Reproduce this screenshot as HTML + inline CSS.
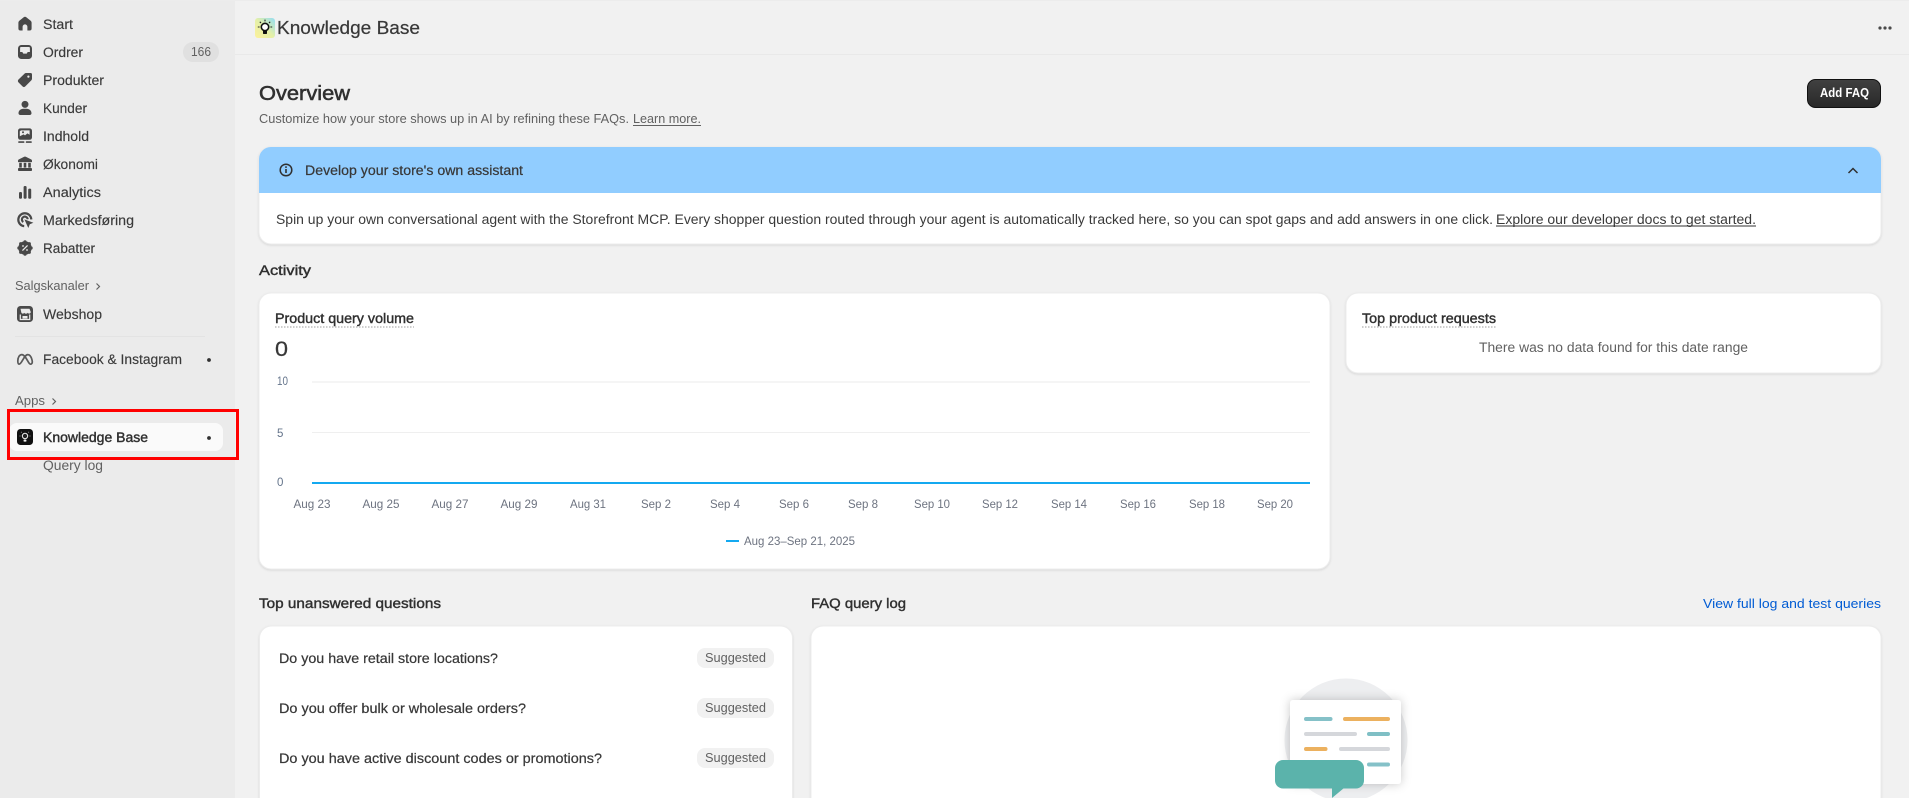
<!DOCTYPE html>
<html lang="en">
<head>
<meta charset="utf-8">
<title>Knowledge Base</title>
<style>
html,body{margin:0;padding:0;width:1909px;height:798px;overflow:hidden;background:#f1f1f1}
svg{display:block}
text{font-family:"Liberation Sans",Arial,sans-serif;font-size:13px;fill:#303030}
.nav{font-size:13.5px;fill:#3a3a3a;stroke:#3a3a3a;stroke-width:.14}
.g{fill:#616161}
.m{fill:#383838;stroke:#383838;stroke-width:.22}
.b{fill:#303030;stroke:#303030;stroke-width:.4}
.h{fill:#303030;stroke:#303030;stroke-width:.55}
.ax{font-size:11.5px;fill:#6d7380;text-anchor:middle}
.ay{font-size:11.5px;fill:#64748b}
.card{fill:#fff;stroke:#ececec;stroke-width:1;filter:drop-shadow(0 1px 1px rgba(0,0,0,.1))}
.ic{fill:#484848}
</style>
</head>
<body>
<svg xmlns="http://www.w3.org/2000/svg" width="1909" height="798" viewBox="0 0 1909 798">
<defs>
<linearGradient id="hg" x1="0" y1="1" x2="1" y2="0"><stop offset="0" stop-color="#fdf19a"/><stop offset=".5" stop-color="#e4f0a8"/><stop offset="1" stop-color="#92dcf2"/></linearGradient>
<linearGradient id="btn" x1="0" y1="0" x2="0" y2="1"><stop offset="0" stop-color="#414141"/><stop offset="1" stop-color="#282828"/></linearGradient>
<filter id="ds" x="-20%" y="-20%" width="140%" height="140%"><feDropShadow dx="0" dy="0" stdDeviation="5" flood-color="#000" flood-opacity=".22"/></filter>
</defs>

<!-- backgrounds -->
<rect width="1909" height="798" fill="#f1f1f1"/>
<rect width="235" height="798" fill="#ebebeb"/>
<rect x="235" y="54" width="1674" height="1" fill="#e9e9e9"/>
<rect width="1909" height="1" fill="#ececec"/>

<!-- sidebar icons -->
<g class="ic">
<g transform="translate(15,14)"><path d="M8.7 3.3a2.1 2.1 0 0 1 2.6 0l4.2 3.3c.7.5 1.1 1.3 1.1 2.2v5.7a2 2 0 0 1-2 2h-2.2v-3.7a2.4 2.4 0 0 0-4.8 0V16.5H5.4a2 2 0 0 1-2-2V8.8c0-.9.4-1.7 1.1-2.2z"/></g>
<g transform="translate(15,42)"><rect x="3" y="3" width="14" height="14" rx="3.4"/><path fill="#ebebeb" d="M6 5h8c.5 0 .9.4.9.9V10h-2.2l-1 1.6H8.3l-1-1.6H5.1V5.9c0-.5.4-.9.9-.9z"/></g>
<g transform="translate(15,70)"><path d="M11.2 3h4.3A1.5 1.5 0 0 1 17 4.5v4.3a2 2 0 0 1-.6 1.4l-6.1 6.2a2 2 0 0 1-2.8 0l-4-4a2 2 0 0 1 0-2.9l6.2-6A2 2 0 0 1 11.2 3z"/><circle cx="13.4" cy="6.6" r="1.1" fill="#ebebeb"/></g>
<g transform="translate(15,98)"><circle cx="10" cy="6.4" r="3.5"/><path d="M3.5 15.2c0-2.6 2.2-4.4 4.9-4.4h3.2c2.7 0 4.9 1.8 4.9 4.4 0 1-.8 1.8-1.8 1.8H5.3c-1 0-1.8-.8-1.8-1.8z"/></g>
<g transform="translate(15,126)"><rect x="3" y="2.4" width="14" height="11.4" rx="2.4"/><path fill="#ebebeb" d="M6 4.4h8.6v4.4l-2.2-1.4-2.4 2-1.4-1-3.8 1.8V5.2z"/><circle cx="8" cy="6.3" r="1" fill="#484848"/><rect x="3.2" y="15.3" width="6.2" height="1.6" rx=".7"/><rect x="10.8" y="15.3" width="6" height="1.6" rx=".7"/></g>
<g transform="translate(15,154)"><path d="M9.2 2.8c.5-.2 1.1-.2 1.6 0l5.3 2.6c.6.3.9.8.9 1.4v1.3H3V6.8c0-.6.3-1.1.9-1.4z"/><rect x="4.2" y="8.8" width="2.6" height="4.8"/><rect x="8.7" y="8.8" width="2.6" height="4.8"/><rect x="13.2" y="8.8" width="2.6" height="4.8"/><rect x="3" y="14" width="14" height="3" rx=".9"/></g>
<g transform="translate(15,182)"><rect x="4" y="10" width="3" height="6.8" rx="1.2"/><rect x="8.6" y="4" width="3" height="12.8" rx="1.2"/><rect x="13.2" y="6.6" width="3" height="10.2" rx="1.2"/></g>
<g transform="translate(15,210)"><path fill="none" stroke="#484848" stroke-width="2.2" d="M9.2 16.2a6.5 6.5 0 1 1 7.1-6.8"/><path fill="none" stroke="#484848" stroke-width="2.1" d="M8.3 12a2.9 2.9 0 1 1 4.4-2.8"/><path d="M9.4 9.4l9 3.3-3.6 1.5-1.5 3.8z"/></g>
<g transform="translate(15,238)"><circle cx="10" cy="10" r="6.7"/><circle cx="10" cy="3.9" r="1.6"/><circle cx="10" cy="16.1" r="1.6"/><circle cx="3.9" cy="10" r="1.6"/><circle cx="16.1" cy="10" r="1.6"/><circle cx="5.7" cy="5.7" r="1.6"/><circle cx="14.3" cy="5.7" r="1.6"/><circle cx="5.7" cy="14.3" r="1.6"/><circle cx="14.3" cy="14.3" r="1.6"/><path stroke="#ebebeb" stroke-width="1.3" stroke-linecap="round" d="M7.8 12.2l4.4-4.4"/><circle cx="8" cy="8" r=".9" fill="#ebebeb"/><circle cx="12" cy="12" r=".9" fill="#ebebeb"/></g>
</g>

<!-- sidebar labels -->
<text class="nav" x="43" y="29" textLength="30" lengthAdjust="spacingAndGlyphs">Start</text>
<text class="nav" x="43" y="57" textLength="40" lengthAdjust="spacingAndGlyphs">Ordrer</text>
<rect x="183" y="42" width="36" height="20" rx="10" fill="#e0e0e0"/>
<text x="191" y="56" style="font-size:12.5px;fill:#616161" textLength="20" lengthAdjust="spacingAndGlyphs">166</text>
<text class="nav" x="43" y="85" textLength="61" lengthAdjust="spacingAndGlyphs">Produkter</text>
<text class="nav" x="43" y="113" textLength="44" lengthAdjust="spacingAndGlyphs">Kunder</text>
<text class="nav" x="43" y="141" textLength="46" lengthAdjust="spacingAndGlyphs">Indhold</text>
<text class="nav" x="43" y="169" textLength="55" lengthAdjust="spacingAndGlyphs">Økonomi</text>
<text class="nav" x="43" y="197" textLength="58" lengthAdjust="spacingAndGlyphs">Analytics</text>
<text class="nav" x="43" y="225" textLength="91" lengthAdjust="spacingAndGlyphs">Markedsføring</text>
<text class="nav" x="43" y="253" textLength="52" lengthAdjust="spacingAndGlyphs">Rabatter</text>

<text x="15" y="290" style="font-size:12.5px;fill:#616161" textLength="74" lengthAdjust="spacingAndGlyphs">Salgskanaler</text>
<path d="M96.5 283.5l3 3-3 3" fill="none" stroke="#616161" stroke-width="1.2"/>

<rect x="17" y="306" width="16" height="16" rx="3.5" fill="#4a4a4a"/>
<path d="M20.5 308.8h9l1.3 3.2c0 1-.8 1.6-1.5 1.6-.7 0-1.2-.4-1.5-.9-.3.5-.9.9-1.5.9h-.6c-.6 0-1.2-.4-1.5-.9-.3.5-.8.9-1.5.9-.7 0-1.5-.6-1.5-1.6z" fill="#ebebeb"/>
<path d="M20.3 314.5v5h9.4v-5" fill="none" stroke="#ebebeb" stroke-width="1.2"/>
<rect x="22.5" y="316" width="5" height="2.6" fill="#ebebeb"/>
<text class="nav" x="43" y="319" textLength="59" lengthAdjust="spacingAndGlyphs">Webshop</text>

<rect x="15" y="336" width="190" height="1" fill="#e3e3e3"/>

<path d="M17.8 361c0-3.6 1.7-6.4 4-6.4 2.4 0 4.4 3.6 6.2 6.8 1 1.8 2 3.1 3.1 2.7 1.2-.5 1.4-2.5.8-4.6-.7-2.6-2.2-4.9-4.1-4.9-2 0-3.6 2.8-5.2 5.6-1.3 2.3-2.3 3.9-3.4 3.9-1 0-1.4-1.4-1.4-3.1z" fill="none" stroke="#5a5a5a" stroke-width="1.7"/>
<text class="nav" x="43" y="364" textLength="139" lengthAdjust="spacingAndGlyphs">Facebook &amp; Instagram</text>
<circle cx="209" cy="360" r="1.9" fill="#303030"/>

<text x="15" y="405" style="font-size:12.5px;fill:#616161" textLength="30" lengthAdjust="spacingAndGlyphs">Apps</text>
<path d="M52.5 398.5l3 3-3 3" fill="none" stroke="#616161" stroke-width="1.2"/>

<rect x="9" y="423" width="214" height="28" rx="8" fill="#fafafa"/>
<rect x="17" y="429" width="16" height="16" rx="3.5" fill="#111"/>
<circle cx="25" cy="436" r="2.7" fill="#222" stroke="#f2f2f2" stroke-width="1"/>
<rect x="23.6" y="439.6" width="2.8" height="2" rx=".5" fill="#f2f2f2"/>
<path d="M20.6 436h-1.2M30.6 436h-1.2M21.8 432.6l-.8-.8M28.2 432.6l.8-.8" stroke="#999" stroke-width=".8"/>
<text class="nav b" x="43" y="442" textLength="105" lengthAdjust="spacingAndGlyphs">Knowledge Base</text>
<circle cx="209" cy="438" r="1.9" fill="#303030"/>
<text class="g" x="43" y="470" style="font-size:13.5px" textLength="60" lengthAdjust="spacingAndGlyphs">Query log</text>

<!-- red highlight -->
<rect x="8.5" y="410.5" width="229" height="48" fill="none" stroke="#f00" stroke-width="3"/>

<!-- header -->
<rect x="255" y="18" width="20" height="20" rx="3" fill="url(#hg)"/>
<circle cx="265" cy="27" r="3.7" fill="#fff" stroke="#111" stroke-width="1.6"/>
<rect x="263" y="30" width="4" height="4" rx=".8" fill="#111"/>
<path d="M259.6 27h-1.8M272.2 27h-1.8M261 23l-1.2-1.2M269 23l1.2-1.2M265 21.4v-1.8" stroke="#222" stroke-width="1.1"/>
<text class="m" x="277" y="34" style="font-size:18.5px" textLength="143" lengthAdjust="spacingAndGlyphs">Knowledge Base</text>
<circle cx="1880" cy="28" r="1.6" fill="#4a4a4a"/><circle cx="1885" cy="28" r="1.6" fill="#4a4a4a"/><circle cx="1890" cy="28" r="1.6" fill="#4a4a4a"/>

<!-- page title -->
<text class="h" x="259" y="100" style="font-size:20.5px" textLength="91" lengthAdjust="spacingAndGlyphs">Overview</text>
<text class="g" x="259" y="123" style="font-size:12.5px" textLength="370" lengthAdjust="spacingAndGlyphs">Customize how your store shows up in AI by refining these FAQs.</text>
<text class="g" x="633" y="123" style="font-size:12.5px" textLength="68" lengthAdjust="spacingAndGlyphs">Learn more.</text>
<rect x="633" y="125" width="68" height="1" fill="#616161"/>

<rect x="1807.5" y="79.5" width="73" height="28" rx="8" fill="url(#btn)" stroke="#111"/>
<text x="1820" y="97" style="font-size:12.5px;font-weight:bold;fill:#fff" textLength="49" lengthAdjust="spacingAndGlyphs">Add FAQ</text>

<!-- banner -->
<rect class="card" x="259" y="147" width="1622" height="97" rx="12"/>
<path d="M259 193v-34a12 12 0 0 1 12-12h1598a12 12 0 0 1 12 12v34z" fill="#91cdff"/>
<circle cx="286" cy="170" r="5.8" fill="none" stroke="#303030" stroke-width="1.5"/>
<rect x="285.2" y="169" width="1.6" height="4" fill="#303030"/><rect x="285.2" y="166.3" width="1.6" height="1.6" fill="#303030"/>
<text class="m" x="305" y="175" style="font-size:13.5px" textLength="218" lengthAdjust="spacingAndGlyphs">Develop your store's own assistant</text>
<path d="M1848.5 173l4.5-4.5 4.5 4.5" fill="none" stroke="#303030" stroke-width="1.5"/>
<text x="276" y="224" style="font-size:13.5px;fill:#3a3a3a" textLength="1217" lengthAdjust="spacingAndGlyphs">Spin up your own conversational agent with the Storefront MCP. Every shopper question routed through your agent is automatically tracked here, so you can spot gaps and add answers in one click.</text>
<text x="1496" y="224" style="font-size:13.5px;fill:#3a3a3a" textLength="260" lengthAdjust="spacingAndGlyphs">Explore our developer docs to get started.</text>
<rect x="1496" y="225.5" width="260" height="1" fill="#303030"/>

<!-- activity -->
<text class="b" x="259" y="275" style="font-size:13.5px" textLength="52" lengthAdjust="spacingAndGlyphs">Activity</text>

<rect class="card" x="259" y="293" width="1071" height="276" rx="12"/>
<text class="b" x="275" y="323" style="font-size:13.5px" textLength="139" lengthAdjust="spacingAndGlyphs">Product query volume</text>
<line x1="275" y1="327" x2="414" y2="327" stroke="#b0b0b0" stroke-width="1.2" stroke-dasharray="1.5 1.5"/>
<text class="m" x="275" y="356" style="font-size:21px" textLength="13" lengthAdjust="spacingAndGlyphs">0</text>

<text class="ay" x="277" y="385" textLength="11" lengthAdjust="spacingAndGlyphs">10</text>
<text class="ay" x="277" y="437">5</text>
<text class="ay" x="277" y="486">0</text>
<rect x="312" y="381" width="998" height="2" fill="#f5f5f5"/>
<rect x="312" y="432" width="998" height="1" fill="#efefef"/>
<rect x="312" y="482" width="998" height="2" fill="#14a9f0"/>

<text class="ax" x="312" y="508" textLength="37" lengthAdjust="spacingAndGlyphs">Aug 23</text>
<text class="ax" x="381" y="508" textLength="37" lengthAdjust="spacingAndGlyphs">Aug 25</text>
<text class="ax" x="450" y="508" textLength="37" lengthAdjust="spacingAndGlyphs">Aug 27</text>
<text class="ax" x="519" y="508" textLength="37" lengthAdjust="spacingAndGlyphs">Aug 29</text>
<text class="ax" x="588" y="508" textLength="36" lengthAdjust="spacingAndGlyphs">Aug 31</text>
<text class="ax" x="656" y="508" textLength="30" lengthAdjust="spacingAndGlyphs">Sep 2</text>
<text class="ax" x="725" y="508" textLength="30" lengthAdjust="spacingAndGlyphs">Sep 4</text>
<text class="ax" x="794" y="508" textLength="30" lengthAdjust="spacingAndGlyphs">Sep 6</text>
<text class="ax" x="863" y="508" textLength="30" lengthAdjust="spacingAndGlyphs">Sep 8</text>
<text class="ax" x="932" y="508" textLength="36" lengthAdjust="spacingAndGlyphs">Sep 10</text>
<text class="ax" x="1000" y="508" textLength="36" lengthAdjust="spacingAndGlyphs">Sep 12</text>
<text class="ax" x="1069" y="508" textLength="36" lengthAdjust="spacingAndGlyphs">Sep 14</text>
<text class="ax" x="1138" y="508" textLength="36" lengthAdjust="spacingAndGlyphs">Sep 16</text>
<text class="ax" x="1207" y="508" textLength="36" lengthAdjust="spacingAndGlyphs">Sep 18</text>
<text class="ax" x="1275" y="508" textLength="36" lengthAdjust="spacingAndGlyphs">Sep 20</text>

<rect x="726" y="540" width="13" height="2" fill="#14a9f0"/>
<text x="744" y="545" style="font-size:11.5px;fill:#6d7380" textLength="111" lengthAdjust="spacingAndGlyphs">Aug 23–Sep 21, 2025</text>

<rect class="card" x="1346" y="293" width="535" height="80" rx="12"/>
<text class="b" x="1362" y="323" style="font-size:13.5px" textLength="134" lengthAdjust="spacingAndGlyphs">Top product requests</text>
<line x1="1362" y1="327" x2="1496" y2="327" stroke="#b0b0b0" stroke-width="1.2" stroke-dasharray="1.5 1.5"/>
<text class="g" x="1479" y="352" style="font-size:13.5px" textLength="269" lengthAdjust="spacingAndGlyphs">There was no data found for this date range</text>

<!-- bottom -->
<text class="b" x="259" y="608" style="font-size:13.5px" textLength="182" lengthAdjust="spacingAndGlyphs">Top unanswered questions</text>
<text class="b" x="811" y="608" style="font-size:13.5px" textLength="95" lengthAdjust="spacingAndGlyphs">FAQ query log</text>
<text x="1703" y="608" style="font-size:13px;fill:#005bd3" textLength="178" lengthAdjust="spacingAndGlyphs">View full log and test queries</text>

<rect class="card" x="259.5" y="626" width="533" height="190" rx="12"/>
<text class="m" x="279" y="663" style="font-size:13.5px" textLength="219" lengthAdjust="spacingAndGlyphs">Do you have retail store locations?</text>
<rect x="697" y="648" width="77" height="20" rx="8" fill="#f1f1f1"/>
<text class="g" x="705" y="662" style="font-size:12.5px" textLength="61" lengthAdjust="spacingAndGlyphs">Suggested</text>
<text class="m" x="279" y="713" style="font-size:13.5px" textLength="247" lengthAdjust="spacingAndGlyphs">Do you offer bulk or wholesale orders?</text>
<rect x="697" y="698" width="77" height="20" rx="8" fill="#f1f1f1"/>
<text class="g" x="705" y="712" style="font-size:12.5px" textLength="61" lengthAdjust="spacingAndGlyphs">Suggested</text>
<text class="m" x="279" y="763" style="font-size:13.5px" textLength="323" lengthAdjust="spacingAndGlyphs">Do you have active discount codes or promotions?</text>
<rect x="697" y="748" width="77" height="20" rx="8" fill="#f1f1f1"/>
<text class="g" x="705" y="762" style="font-size:12.5px" textLength="61" lengthAdjust="spacingAndGlyphs">Suggested</text>

<rect class="card" x="811" y="626" width="1070" height="190" rx="12"/>

<!-- illustration -->
<circle cx="1346" cy="740" r="61.5" fill="#edeef0"/>
<rect x="1290" y="700" width="111" height="84" rx="3" fill="#fff" filter="url(#ds)"/>
<rect x="1304" y="717" width="28.5" height="4" rx="2" fill="#85c1c8"/>
<rect x="1343" y="717" width="47" height="4" rx="2" fill="#ecb15f"/>
<rect x="1304" y="732" width="53" height="4" rx="2" fill="#d5d7db"/>
<rect x="1367" y="732" width="23" height="4" rx="2" fill="#7fbfc5"/>
<rect x="1304" y="747" width="23.5" height="4" rx="2" fill="#ecb15f"/>
<rect x="1339" y="747" width="51" height="4" rx="2" fill="#d5d7db"/>
<rect x="1367" y="762.5" width="23" height="4" rx="2" fill="#85c1c8"/>
<rect x="1275" y="760" width="89" height="28.5" rx="8" fill="#5bb3ab"/>
<path d="M1332 788h12l-12 10z" fill="#5bb3ab"/>
</svg>
</body>
</html>
